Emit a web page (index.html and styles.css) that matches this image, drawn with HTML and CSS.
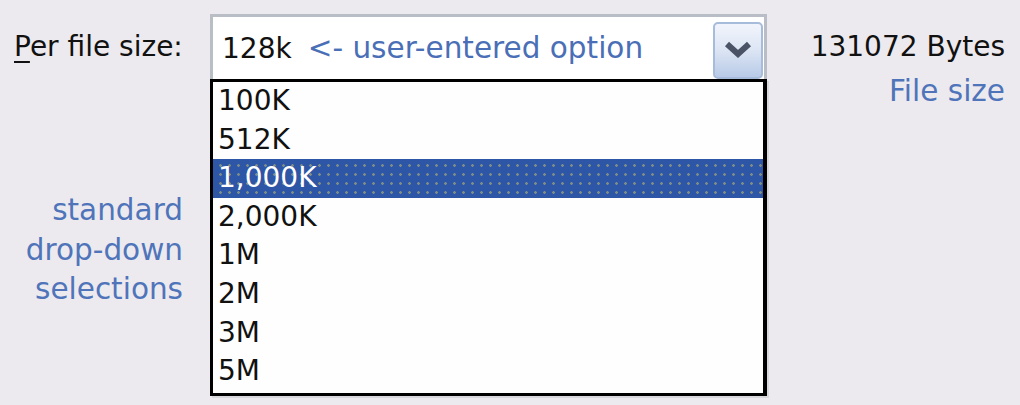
FILE: index.html
```html
<!DOCTYPE html>
<html>
<head>
<meta charset="utf-8">
<link rel="stylesheet" href="styles.css">
</head>
<body>
<div class="page">
  <div class="label-col">
    <div class="field-label"><span class="accel">P</span>er file size:</div>
    <div class="note">standard<br>drop-down<br>selections</div>
  </div>
  <div class="combo-col">
    <div class="combo">
      <div class="combo-value"><span class="value">128k</span><span class="hint">&lt;- user-entered option</span></div>
      <div class="combo-btn">
        <svg width="30" height="20" viewBox="0 0 30 20"><path d="M4 4 L15 14 L26 4" fill="none" stroke="#4b5466" stroke-width="6" stroke-linejoin="miter"/></svg>
      </div>
    </div>
    <ul class="list">
      <li>100K</li>
      <li>512K</li>
      <li class="selected">1,000K</li>
      <li>2,000K</li>
      <li>1M</li>
      <li>2M</li>
      <li>3M</li>
      <li>5M</li>
    </ul>
  </div>
  <div class="info-col">
    <div class="bytes">131072 Bytes</div>
    <div class="caption">File size</div>
  </div>
</div>
</body>
</html>
```
FILE: styles.css
```css
html, body {
  margin: 0;
  padding: 0;
  background: #eceaee;
  height: 100%;
}
body {
  font-family: "DejaVu Sans", Verdana, sans-serif;
  font-size: 28px;
  color: #111;
}
.page {
  display: flex;
  padding-top: 14px;
}
.label-col {
  width: 210px;
  flex: none;
}
.field-label {
  height: 65px;
  line-height: 65px;
  padding-left: 14px;
}
.accel {
  text-decoration: underline;
  text-underline-offset: 5px;
}
.note {
  margin-top: 112px;
  padding-right: 27px;
  text-align: right;
  line-height: 39.5px;
  color: #4f74ba;
  font-size: 29.5px;
}
.combo-col {
  width: 557px;
  flex: none;
}
.combo {
  box-sizing: border-box;
  height: 65px;
  border: 3px solid #b9bec6;
  border-bottom: none;
  background: #fff;
  display: flex;
  align-items: center;
  padding-left: 9px;
  padding-right: 1px;
}
.combo-value {
  flex: 1;
  white-space: nowrap;
}
.hint {
  margin-left: 16px;
  color: #4a6fb6;
  font-size: 29.5px;
}
.combo-btn {
  box-sizing: border-box;
  width: 50px;
  height: 57px;
  margin-top: 4px;
  border: 2px solid #a7bbdb;
  border-radius: 5px;
  background: linear-gradient(#f1f4fb, #dfe7f5 45%, #b8cae7);
  display: flex;
  align-items: center;
  justify-content: center;
}
.list {
  box-sizing: border-box;
  list-style: none;
  margin: 0;
  padding: 0 0 4px 0;
  height: 317px;
  border: 3px solid #000;
  border-right-width: 4px;
  background: #fdfefd;
  box-shadow: 2px 2px 0 #d8d8dc;
}
.list li {
  height: 38.6px;
  line-height: 38.6px;
  padding-left: 5px;
}
.list li.selected {
  color: #fff;
  background-color: #2d56a6;
  background-image: radial-gradient(circle, #7e8e86 1px, transparent 1.6px);
  background-size: 9px 9px;
  background-position: 3px 2px;
}
.info-col {
  flex: 1;
  text-align: right;
  padding-right: 15px;
  padding-top: 11px;
  line-height: 44px;
}
.caption {
  color: #4f74ba;
  font-size: 29.5px;
}
```
